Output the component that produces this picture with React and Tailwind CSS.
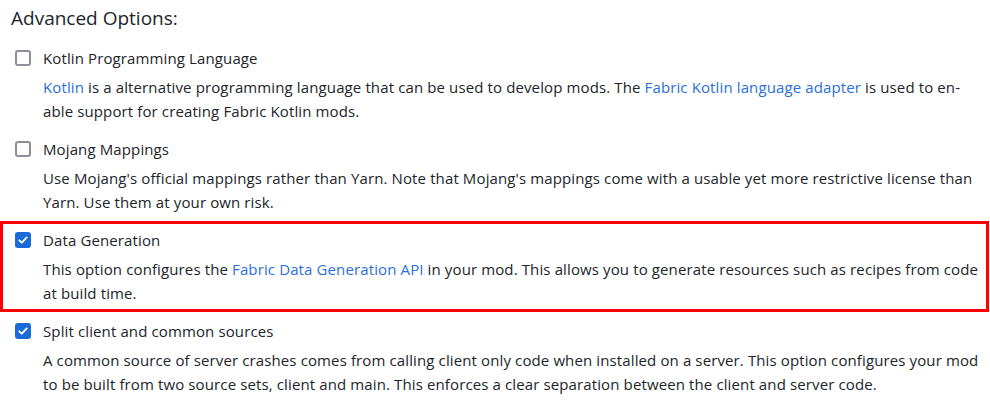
import React from 'react';

function Box({ checked }) {
  if (checked) {
    return (
      <span className="mt-[4px] flex h-4 w-4 shrink-0 items-center justify-center rounded-[3px] bg-[#1b6ad9]">
        <svg viewBox="0 0 16 16" className="h-[12px] w-[12px]" fill="none">
          <path d="M3 8.4 6.4 11.6 13 4.6" stroke="white" strokeWidth="2.4" strokeLinecap="round" strokeLinejoin="round" />
        </svg>
      </span>
    );
  }
  return <span className="mt-[4px] block h-4 w-4 shrink-0 rounded-[3px] border-2 border-[#8e8e98] bg-white" />;
}

const L = ({ children }) => <a className="text-[#2b6fdb]">{children}</a>;

// each option: checkbox + label, description underneath
function Option({ checked, label, highlight, children }) {
  return (
    <div className={`border-[3px] px-[12px] pt-[4px] pb-[4px] ${highlight ? 'border-[#ff0000]' : 'border-transparent'}`}>
      <div className="flex items-start gap-[12px]">
        <Box checked={checked} />
        <div className="leading-6">{label}</div>
      </div>
      <p className="mt-[5px] whitespace-nowrap pl-[28px] leading-6">{children}</p>
    </div>
  );
}

export default function App() {
  return (
    <div className="h-[404px] w-[990px] overflow-hidden bg-white pr-px text-[15px] tracking-[0.12px] text-[#212529]" style={{ fontFamily: '"Open Sans", "Noto Sans", sans-serif' }}>
      <h3 className="mb-[7px] ml-[11px] pt-[4px] text-[19px] leading-[28px] tracking-normal">Advanced Options:</h3>

      <Option label="Kotlin Programming Language">
        <L>Kotlin</L> is a alternative programming language that can be used to develop mods. The <L>Fabric Kotlin language adapter</L> is used to en-
        <br />
        able support for creating Fabric Kotlin mods.
      </Option>

      <Option label="Mojang Mappings">
        Use Mojang's official mappings rather than Yarn. Note that Mojang's mappings come with a usable yet more restrictive license than
        <br />
        Yarn. Use them at your own risk.
      </Option>

      <Option checked highlight label="Data Generation">
        This option configures the <L>Fabric Data Generation API</L> in your mod. This allows you to generate resources such as recipes from code
        <br />
        at build time.
      </Option>

      <Option checked label="Split client and common sources">
        A common source of server crashes comes from calling client only code when installed on a server. This option configures your mod
        <br />
        to be built from two source sets, client and main. This enforces a clear separation between the client and server code.
      </Option>
    </div>
  );
}
